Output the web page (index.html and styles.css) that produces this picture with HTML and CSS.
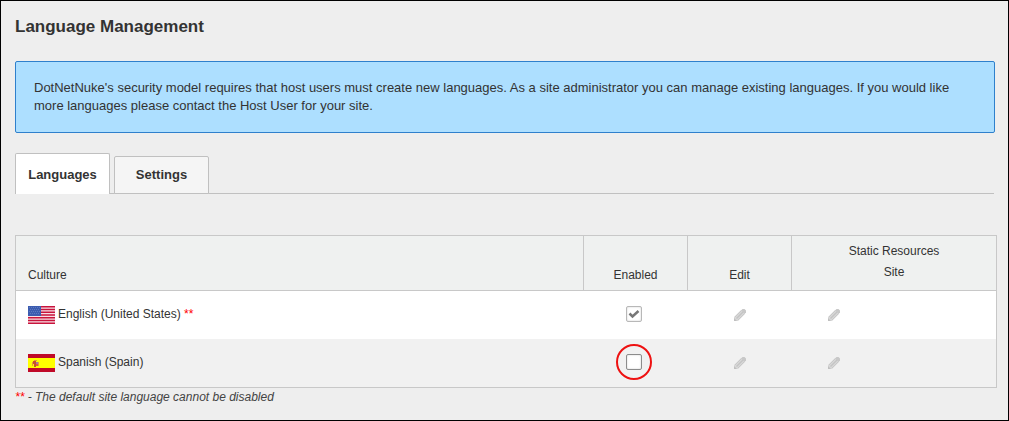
FILE: index.html
```
<!DOCTYPE html>
<html lang="en">
<head>
<meta charset="utf-8">
<title>Language Management</title>
<link rel="stylesheet" href="styles.css">
</head>
<body>
<svg class="defs" aria-hidden="true">
  <symbol id="pencil" viewBox="0 0 12 12">
    <path d="M0 12V8L7 1L11 5L4 12Z" fill="#d8d8d8"/>
    <path d="M7 1.500L8.500 0H10.500L12 1.500V3.500L10.500 5Z" fill="#c8c8c8"/>
    <path d="M1 8L7.500 1.500M4 11L10.500 4.500" stroke="#c8c8c8" stroke-width="1" fill="none"/>
    <path d="M2.500 9.500L9 3" stroke="#c4c4c4" stroke-width="1.500" fill="none"/>
    <path d="M0 12V9L3 12Z" fill="#c0c0c0"/>
  </symbol>
</svg>
<main class="page">
  <h1 class="title">Language Management</h1>
  <p class="message">DotNetNuke's security model requires that host users must create new languages. As a site administrator you can manage existing languages. If you would like more languages please contact the Host User for your site.</p>
  <div class="tabs" role="tablist">
    <button class="tab tab-active" type="button" role="tab" aria-selected="true">Languages</button>
    <button class="tab" type="button" role="tab" aria-selected="false">Settings</button>
  </div>
  <table class="grid">
    <colgroup><col><col class="col-small"><col class="col-small"><col class="col-static"></colgroup>
    <thead>
      <tr>
        <th class="culture" rowspan="2">Culture</th>
        <th rowspan="2">Enabled</th>
        <th rowspan="2">Edit</th>
        <th class="group">Static Resources</th>
      </tr>
      <tr><th class="sub">Site</th></tr>
    </thead>
    <tbody>
      <tr>
        <td class="culture">
          <label class="language" for="en">
            <svg class="flag" viewBox="0 0 27 18" aria-hidden="true">
              <path fill="#f8dfe4" d="M0 0h27v18H0z"/>
              <path stroke="#c8143c" stroke-width="1.400" d="M0 .7h27M0 3.500h27M0 6.200h27M0 9h27M0 11.800h27M0 14.500h27M0 17.300h27"/>
              <path fill="#3b5cb0" d="M0 0h13v10H0z"/>
              <path stroke="#5c79c0" stroke-width="1" stroke-dasharray="1 1" d="M1 1.500h11M2 3.500h10M1 5.500h11M2 7.500h10"/>
            </svg>
            <span>English (United States) <span class="star">**</span></span>
          </label>
        </td>
        <td class="enabled"><span class="toggle"><input class="check" id="en" type="checkbox" checked disabled><svg class="tick" viewBox="0 0 16 16" aria-hidden="true"><path d="M3.500 7.500L6.500 10.500L12.500 5" fill="none" stroke="#777777" stroke-width="2.500"/></svg></span></td>
        <td class="action"><button class="edit" type="button" aria-label="Edit English"><svg class="icon"><use href="#pencil"/></svg></button></td>
        <td class="action static"><button class="edit" type="button" aria-label="Edit English site resources"><svg class="icon"><use href="#pencil"/></svg></button></td>
      </tr>
      <tr class="alt">
        <td class="culture">
          <label class="language" for="es">
            <svg class="flag" viewBox="0 0 27 18" aria-hidden="true">
              <path fill="#c00a28" d="M0 0h27v18H0z"/>
              <path fill="#ffff00" d="M0 4h27v10H0z"/>
              <path fill="#e69a3c" d="M4 8h1v4H4zM10 8h1v4h-1zM6 6h3v1H6z"/>
              <path fill="#c8502d" d="M5 7h3v3H5zM6 10h2v3H6z"/>
              <path fill="#a878a0" d="M8 8h2v2H8z"/>
              <path fill="#e06030" d="M8 10h2v2H8z"/>
            </svg>
            <span>Spanish (Spain)</span>
          </label>
        </td>
        <td class="enabled"><span class="toggle toggle-marked"><input class="check" id="es" type="checkbox"><svg class="tick" viewBox="0 0 16 16" aria-hidden="true"><path d="M3.500 7.500L6.500 10.500L12.500 5" fill="none" stroke="#777777" stroke-width="2.500"/></svg></span></td>
        <td class="action"><button class="edit" type="button" aria-label="Edit Spanish"><svg class="icon"><use href="#pencil"/></svg></button></td>
        <td class="action static"><button class="edit" type="button" aria-label="Edit Spanish site resources"><svg class="icon"><use href="#pencil"/></svg></button></td>
      </tr>
    </tbody>
  </table>
  <p class="note"><span class="star">**</span> - The default site language cannot be disabled</p>
</main>
</body>
</html>
```
FILE: styles.css
```
* { box-sizing: border-box; }

body {
  margin: 0;
  background: #eeeeee;
  color: #333333;
  font-family: "Liberation Sans", Arial, sans-serif;
  font-size: 12px;
  line-height: 18px;
}

.defs {
  position: absolute;
  width: 0;
  height: 0;
}

.page {
  min-height: 100vh;
  padding: 14px 11px 14px 14px;
  border: 1px solid #000000;
}

.title {
  margin: 0 0 22px;
  font-size: 17px;
  line-height: 24px;
}

.message {
  margin: 0 2px 20px 0;
  padding: 17px 24px 17px 18px;
  border: 1px solid #2f80cc;
  border-radius: 2px;
  background: #addfff;
  font-size: 13px;
  line-height: 18px;
}

.tabs {
  display: flex;
  align-items: flex-end;
  gap: 4px;
  margin: 0 3px 41px 0;
  box-shadow: inset 0 -1px #c0c0c0;
}

.tab {
  width: 95px;
  height: 38px;
  padding: 0;
  border: 1px solid #c0c0c0;
  border-radius: 2px 2px 0 0;
  background: #f5f5f5;
  color: #333333;
  font: bold 13px/18px "Liberation Sans", Arial, sans-serif;
}

.tab-active {
  height: 41px;
  padding-top: 2px;
  border-bottom: 0;
  background: #ffffff;
}

.grid {
  width: 100%;
  table-layout: fixed;
  border: 1px solid #c8c8c8;
  border-spacing: 0;
  background: #ffffff;
}

.col-small { width: 104px; }
.col-static { width: 204px; }

th {
  padding: 0 0 6px;
  border-right: 1px solid #c8c8c8;
  border-bottom: 1px solid #c8c8c8;
  background: #eff1f0;
  font-weight: normal;
  vertical-align: bottom;
}

.group {
  padding: 6px 0 0;
  border-right: 0;
  border-bottom: 0;
}

.sub {
  padding: 3px 0 9px;
  border-right: 0;
}

td {
  height: 48px;
  padding: 0;
}

.alt { background: #f1f1f1; }

.culture {
  padding-left: 12px;
  text-align: left;
}

.language {
  display: flex;
  gap: 3px;
}

.flag {
  width: 27px;
  height: 18px;
  margin: 1px 0;
}

.star { color: #ff0000; }

.enabled { padding: 0 4px 2px 0; }

.toggle {
  position: relative;
  display: block;
  width: 16px;
  height: 16px;
  margin: 0 auto;
}

.toggle-marked::after {
  content: "";
  position: absolute;
  inset: -10px;
  border: 2px solid #ee1111;
  border-radius: 50%;
  pointer-events: none;
}

.check {
  display: block;
  width: 16px;
  height: 16px;
  margin: 0;
  appearance: none;
  border: 1px solid #8c8c8c;
  border-radius: 2px;
  background: #ffffff;
  box-shadow: inset 0 0 2px #cccccc;
}

.check:disabled { border-color: #b8b8b8; }

.tick {
  position: absolute;
  inset: 0;
  display: none;
  pointer-events: none;
}

.check:checked + .tick { display: block; }

.edit {
  display: block;
  width: 12px;
  height: 12px;
  margin: 0 auto;
  padding: 0;
  border: 0;
  background: none;
}

.icon {
  display: block;
  width: 12px;
  height: 12px;
}

.static { padding-left: 36px; }
.static .edit { margin-left: 0; }

.note {
  margin: 0;
  color: #444444;
  font-style: italic;
}
```
